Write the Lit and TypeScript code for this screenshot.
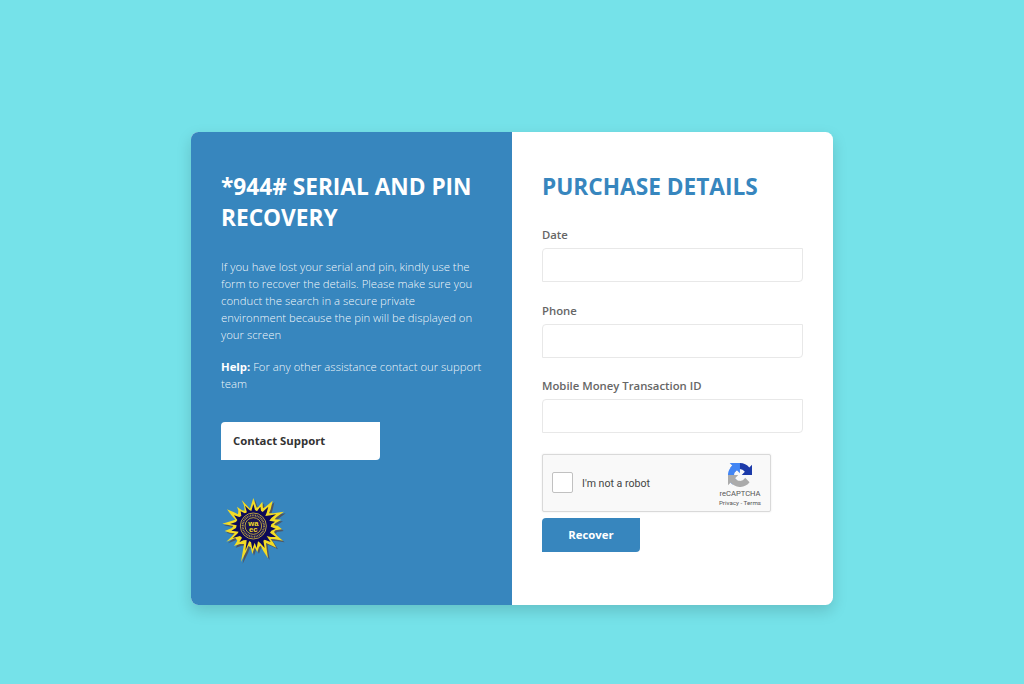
import { LitElement, html, css, svg } from "lit";
import { customElement } from "lit/decorators.js";

const FIELDS = ["Date", "Phone", "Mobile Money Transaction ID"];

const burst =
  "124,30 134,59 139,57 151,41 153,61 160,57 182,38 176,64 171,76 184,76 216,71 194,87 188,94 208,95 190,106 186,111 198,114 210,124 190,127 186,132 196,144 213,158 188,154 176,153 184,164 193,179 174,170 162,165 164,184 168,211 154,189 146,173 141,177 136,192 128,178 121,198 116,178 109,174 103,190 87,222 92,192 96,168 84,168 66,174 76,158 70,150 43,161 60,145 68,136 54,134 38,129 60,120 64,114 31,107 58,99 70,95 58,82 45,64 66,73 78,79 79,68 75,56 90,67 98,68 96,52 89,36 104,52 114,62";
const core =
  "124,48 129,66 135,70 145,56 147,68 152,72 169,56 164,74 160,84 176,82 192,79 178,90 172,98 189,101 178,109 176,116 191,122 178,128 174,134 192,147 176,147 164,144 176,162 158,155 154,158 158,180 144,164 138,160 134,180 128,164 121,184 117,162 112,158 100,188 103,166 104,156 94,157 82,163 90,149 84,144 62,150 76,137 80,131 58,128 72,120 74,112 54,108 72,102 76,96 66,82 82,87 88,84 86,70 98,76 105,74 99,53 112,66 118,69";

const emblem = svg`
  <polygon points=${burst} fill="#514c55" opacity=".85" transform="translate(5 5)"/>
  <polygon points=${burst} fill="#f3dc25"/>
  <polygon points=${core} fill="#0d0a58"/>
  <circle cx="124" cy="115" r="46" fill="#0d0a58"/>
  <circle cx="124" cy="114" r="39" fill="none" stroke="#d8bf3c" stroke-width="2.5"/>
  <circle cx="124" cy="114" r="32" fill="none" stroke="#a8924a" stroke-width="6" stroke-dasharray="3 2"/>
  <circle cx="124" cy="114" r="25" fill="#1a1450" stroke="#d8bf3c" stroke-width="2.5"/>
  <text x="124" y="113" text-anchor="middle">wa</text>
  <text x="124" y="132" text-anchor="middle">ec</text>`;

const recaptcha = svg`
  <path d="M64 31.960c0-.46-.01-.92-.03-1.380V4.600l-7.180 7.180C50.870 4.580 41.920 0 31.900 0 21.470 0 12.210 4.970 6.360 12.660l11.770 11.900a15.600 15.600 0 0 1 4.770-5.350c2.050-1.600 4.960-2.910 9-2.910.49 0 .86.060 1.140.160 5 .4 9.340 3.160 11.900 7.160l-8.330 8.340L64 31.960" fill="#1c3aa9"/>
  <path d="M31.860 0h-1.370L4.500.03l7.180 7.180C4.480 13.100-.1 22.040-.1 32.070c0 10.430 4.970 19.690 12.660 25.540l11.890-11.770a15.600 15.600 0 0 1-5.340-4.770c-1.610-2.050-2.910-4.960-2.910-9 0-.49.060-.86.160-1.140.4-5 3.160-9.340 7.160-11.900l8.340 8.340L31.860 0" fill="#4285f4"/>
  <path d="M-.1 32.070c0 .46.010.92.030 1.370V59.430l7.180-7.180C13 59.450 21.940 64.030 31.970 64.030c10.430 0 19.690-4.970 25.540-12.660L45.740 39.480a15.600 15.600 0 0 1-4.770 5.340c-2.050 1.610-4.960 2.910-9 2.910-.49 0-.86-.06-1.140-.16-5-.4-9.340-3.160-11.900-7.160l8.340-8.340L-.1 32.070" fill="#ababab"/>`;

@customElement("app-root")
export class AppRoot extends LitElement {
  static styles = css`
    :host {
      display: flex;
      box-sizing: border-box;
      height: 684px;
      padding-top: 132px;
      justify-content: center;
      align-items: flex-start;
      background: #75e2e9;
      font-family: "Open Sans", sans-serif;
      font-size: 11.330px;
      color: #666;
    }
    * { box-sizing: border-box; }
    .card {
      display: grid;
      grid-template-columns: 1fr 1fr;
      width: 642px;
      height: 472.500px;
      border-radius: 7.5px;
      overflow: hidden;
      background: #fff;
      box-shadow: 0 6px 15px rgba(0, 0, 0, 0.15);
    }
    .info, .form {
      display: flex;
      flex-direction: column;
      align-items: flex-start;
      padding: 39px 30px 0;
    }
    .info {
      background: #3786be;
      color: #fff;
    }
    h2 {
      margin: 0;
      font-size: 22.670px;
      line-height: 31px;
      font-weight: 700;
      white-space: nowrap;
    }
    .form h2 { color: #3786be; margin-bottom: 24px; }
    .info h2 { margin-bottom: 25px; }
    p {
      margin: 0 0 15px;
      line-height: 17px;
      font-weight: 300;
      white-space: nowrap;
      color: rgba(255, 255, 255, 0.95);
    }
    p b { font-weight: 700; color: #fff; }
    .support {
      width: 159px;
      height: 38px;
      margin-top: 15px;
      padding: 0 12px 1px;
      border: 0;
      border-radius: 4px 0 4px 0;
      background: #fff;
      color: #333;
      font: 700 11.330px "Open Sans", sans-serif;
      text-align: left;
    }
    .emblem { width: 84px; height: 84px; margin: 28px 0 0 -9px; }
    .emblem text {
      font: 700 23px "Liberation Sans", sans-serif;
      fill: #f3dc25;
    }
    .field {
      display: block;
      width: 261px;
      height: 55px;
      margin-bottom: 20.500px;
      font-weight: 600;
      line-height: 17px;
    }
    .field input {
      display: block;
      width: 100%;
      height: 34px;
      margin-top: 5px;
      border: 1px solid #e8e8e8;
      border-radius: 4px 0 4px 0;
      background: #fff;
      outline: none;
    }
    .captcha {
      display: flex;
      align-items: center;
      width: 229px;
      height: 58px;
      margin-top: 1px;
      padding: 0 9px;
      border: 1px solid #d9d9d9;
      border-radius: 2px;
      background: #f9f9f9;
      box-shadow: 0 0 2px rgba(0, 0, 0, 0.1);
      font-family: Roboto, sans-serif;
      color: #444;
    }
    .box {
      width: 21px;
      height: 21px;
      border: 1.500px solid #c1c1c1;
      border-radius: 2px;
      background: #fff;
    }
    .robot { flex: 1; padding: 2px 0 0 9px; font-size: 10.600px; }
    .brand {
      display: flex;
      flex-direction: column;
      align-items: center;
      width: 44px;
      margin-right: -1px;
      padding-top: 5px;
      color: #555;
      white-space: nowrap;
    }
    .brand svg { width: 24px; height: 24px; }
    .name { margin-top: 2px; font-size: 7.600px; line-height: 10px; }
    .terms { font-size: 6.200px; line-height: 9px; }
    .recover {
      width: 98px;
      height: 34px;
      margin-top: 6px;
      border: 0;
      border-radius: 4px 0 4px 0;
      background: #3786be;
      color: #fff;
      font: 700 11.330px "Open Sans", sans-serif;
    }
  `;

  render() {
    return html`
      <main class="card">
        <section class="info">
          <h2>*944# SERIAL AND PIN<br />RECOVERY</h2>
          <p>
            If you have lost your serial and pin, kindly use the<br />form to
            recover the details. Please make sure you<br />conduct the search in
            a secure private<br />environment because the pin will be displayed
            on<br />your screen
          </p>
          <p><b>Help:</b> For any other assistance contact our support<br />team</p>
          <button class="support">Contact Support</button>
          <svg class="emblem" viewBox="0 0 252 252">${emblem}</svg>
        </section>
        <section class="form">
          <h2>PURCHASE DETAILS</h2>
          ${FIELDS.map((name) => html`<label class="field">${name}<input /></label>`)}
          <div class="captcha">
            <span class="box"></span>
            <span class="robot">I'm not a robot</span>
            <div class="brand">
              <svg viewBox="0 0 64 64">${recaptcha}</svg>
              <span class="name">reCAPTCHA</span>
              <span class="terms">Privacy - Terms</span>
            </div>
          </div>
          <button class="recover">Recover</button>
        </section>
      </main>
    `;
  }
}
